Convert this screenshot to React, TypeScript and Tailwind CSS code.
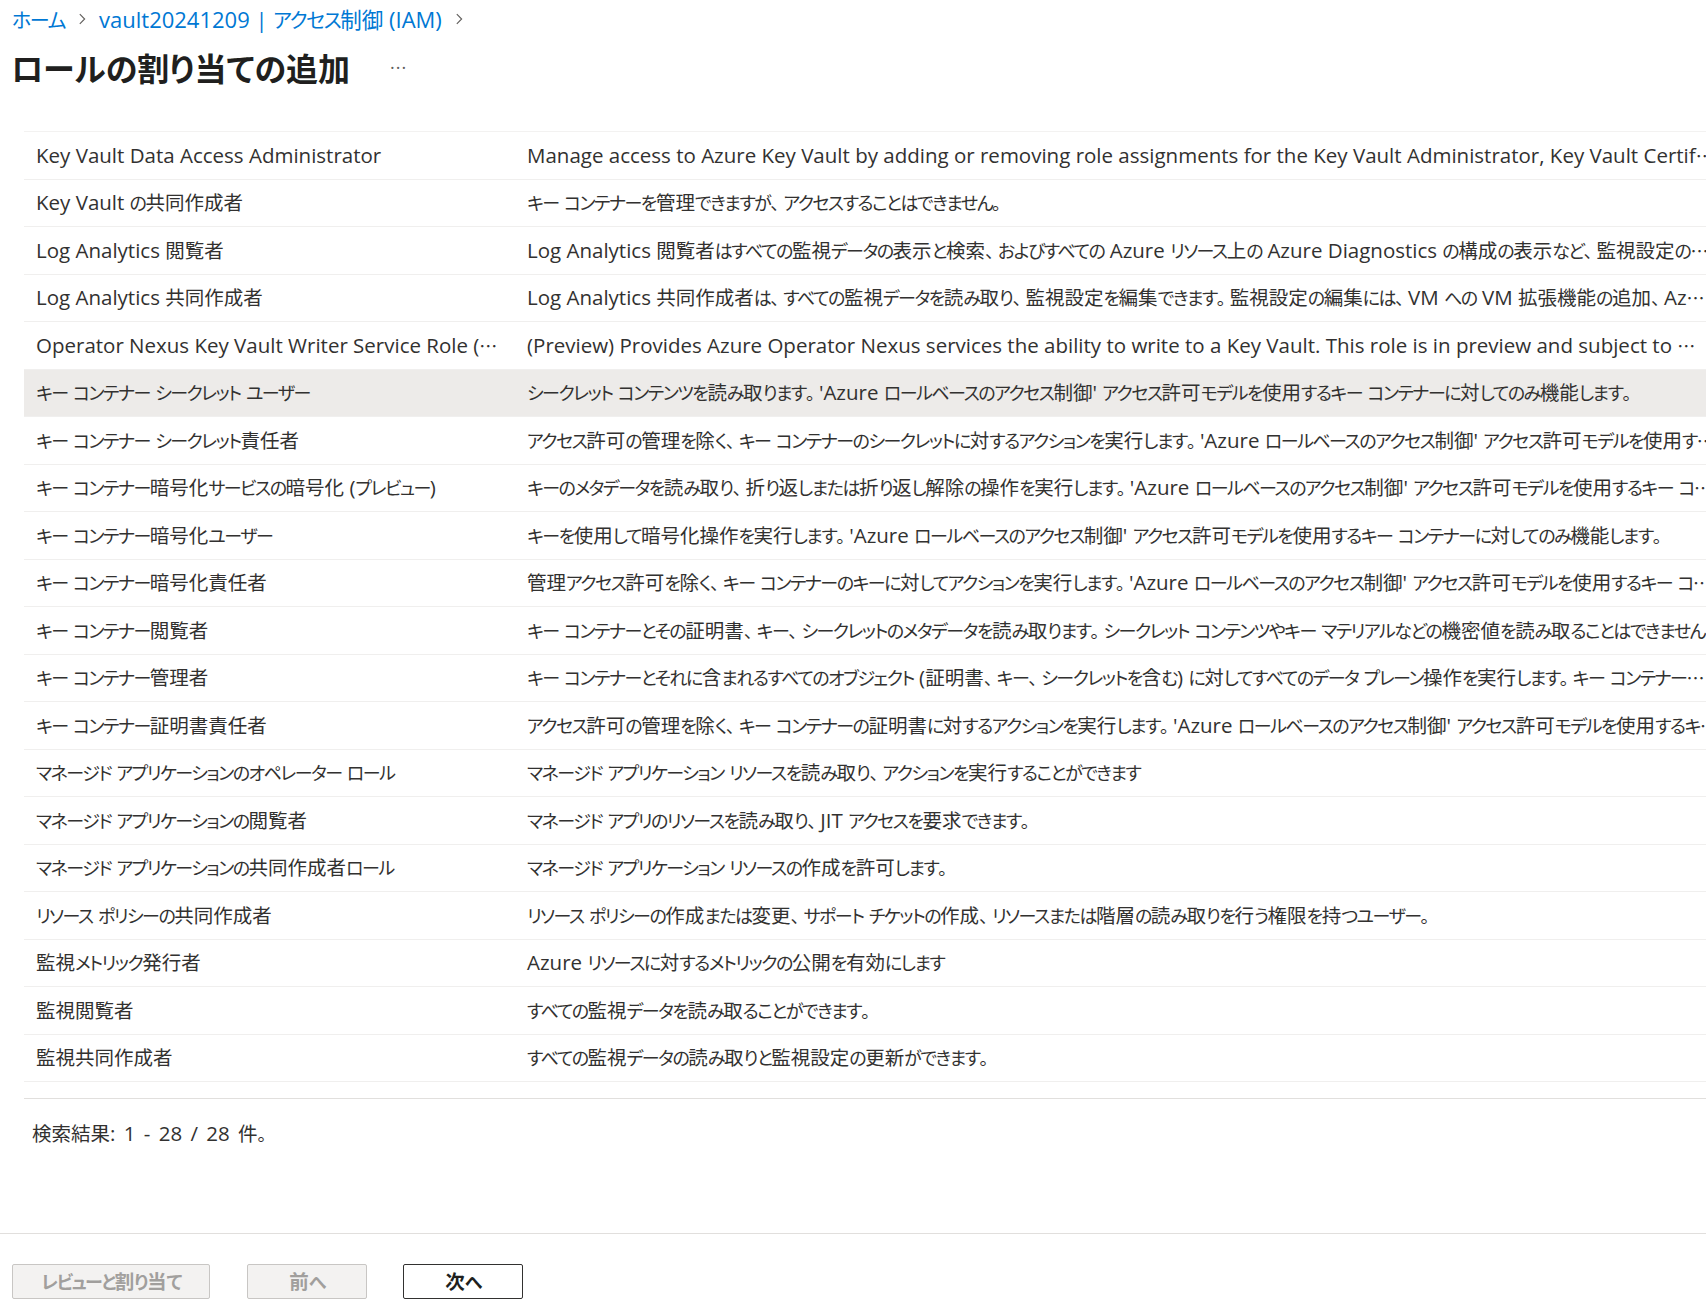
import React from "react";

const rows: [string, string][] = [
  ["Key Vault Data Access Administrator", "Manage access to Azure Key Vault by adding or removing role assignments for the Key Vault Administrator, Key Vault Certif…"],
  ["Key Vault の共同作成者", "キー コンテナーを管理できますが、アクセスすることはできません。"],
  ["Log Analytics 閲覧者", "Log Analytics 閲覧者はすべての監視データの表示と検索、およびすべての Azure リソース上の Azure Diagnostics の構成の表示など、監視設定の…"],
  ["Log Analytics 共同作成者", "Log Analytics 共同作成者は、すべての監視データを読み取り、監視設定を編集できます。監視設定の編集には、VM への VM 拡張機能の追加、Az…"],
  ["Operator Nexus Key Vault Writer Service Role (…", "(Preview) Provides Azure Operator Nexus services the ability to write to a Key Vault. This role is in preview and subject to …"],
  ["キー コンテナー シークレット ユーザー", "シークレット コンテンツを読み取ります。'Azure ロールベースのアクセス制御' アクセス許可モデルを使用するキー コンテナーに対してのみ機能します。"],
  ["キー コンテナー シークレット責任者", "アクセス許可の管理を除く、キー コンテナーのシークレットに対するアクションを実行します。'Azure ロールベースのアクセス制御' アクセス許可モデルを使用す…"],
  ["キー コンテナー暗号化サービスの暗号化 (プレビュー)", "キーのメタデータを読み取り、折り返しまたは折り返し解除の操作を実行します。'Azure ロールベースのアクセス制御' アクセス許可モデルを使用するキー コ…"],
  ["キー コンテナー暗号化ユーザー", "キーを使用して暗号化操作を実行します。'Azure ロールベースのアクセス制御' アクセス許可モデルを使用するキー コンテナーに対してのみ機能します。"],
  ["キー コンテナー暗号化責任者", "管理アクセス許可を除く、キー コンテナーのキーに対してアクションを実行します。'Azure ロールベースのアクセス制御' アクセス許可モデルを使用するキー コ…"],
  ["キー コンテナー閲覧者", "キー コンテナーとその証明書、キー、シークレットのメタデータを読み取ります。シークレット コンテンツやキー マテリアルなどの機密値を読み取ることはできません…"],
  ["キー コンテナー管理者", "キー コンテナーとそれに含まれるすべてのオブジェクト (証明書、キー、シークレットを含む) に対してすべてのデータ プレーン操作を実行します。キー コンテナー…"],
  ["キー コンテナー証明書責任者", "アクセス許可の管理を除く、キー コンテナーの証明書に対するアクションを実行します。'Azure ロールベースのアクセス制御' アクセス許可モデルを使用するキ…"],
  ["マネージド アプリケーションのオペレーター ロール", "マネージド アプリケーション リソースを読み取り、アクションを実行することができます"],
  ["マネージド アプリケーションの閲覧者", "マネージド アプリのリソースを読み取り、JIT アクセスを要求できます。"],
  ["マネージド アプリケーションの共同作成者ロール", "マネージド アプリケーション リソースの作成を許可します。"],
  ["リソース ポリシーの共同作成者", "リソース ポリシーの作成または変更、サポート チケットの作成、リソースまたは階層の読み取りを行う権限を持つユーザー。"],
  ["監視メトリック発行者", "Azure リソースに対するメトリックの公開を有効にします"],
  ["監視閲覧者", "すべての監視データを読み取ることができます。"],
  ["監視共同作成者", "すべての監視データの読み取りと監視設定の更新ができます。"],
];

const SPLIT = /([、。]+|[\u3400-\u9fff\u3005]+|[\u2026\u3000\u3003\u3004\u3006-\u30ff\uff00-\uffef]+)/;
const PUNCT = /^[、。]/;
const KANJI = /^[\u3400-\u9fff\u3005]/;
const KANA = /^[\u2026\u3000\u3003\u3004\u3006-\u30ff\uff00-\uffef]/;

const CLS = {
  row: {
    punct: "font-['Noto_Sans_CJK_JP',sans-serif] [font-feature-settings:normal] text-[18px] tracking-[-5px]",
    kanji: "font-['Noto_Sans_CJK_JP',sans-serif] text-[19.5px]",
    kana: "font-['Noto_Sans_CJK_JP',sans-serif] text-[18px] tracking-[-1.5px]",
  },
  bc: {
    punct: "font-['Noto_Sans_CJK_JP',sans-serif] text-[20px]",
    kanji: "font-['Noto_Sans_CJK_JP',sans-serif] text-[21.5px]",
    kana: "font-['Noto_Sans_CJK_JP',sans-serif] text-[20px] tracking-[-1.4px]",
  },
};

function T({ s, v = "row" }: { s: string; v?: "row" | "bc" }) {
  const parts = s.split(SPLIT);
  return (
    <>
      {parts.map((p, i) => {
        if (!p) return null;
        if (PUNCT.test(p))
          return (
            <span key={i} className={CLS[v].punct}>
              {p}
            </span>
          );
        if (KANJI.test(p))
          return (
            <span key={i} className={CLS[v].kanji}>
              {p}
            </span>
          );
        if (KANA.test(p))
          return (
            <span key={i} className={CLS[v].kana}>
              {p}
            </span>
          );
        return <span key={i}>{p}</span>;
      })}
    </>
  );
}

function Chevron() {
  return (
    <svg width="14" height="14" viewBox="0 0 16 16" className="mx-[10px] shrink-0">
      <path d="M5.5 2.5 L11 8 L5.5 13.5" fill="none" stroke="#605e5c" strokeWidth="1.3" />
    </svg>
  );
}

export default function App() {
  return (
    <div
      lang="ja"
      className="relative w-full h-[1310px] overflow-hidden bg-white text-[#323130] font-['Open_Sans','Noto_Sans_CJK_JP',sans-serif] [font-feature-settings:'palt'] text-[20.5px]"
    >
      {/* breadcrumb */}
      <div className="h-[38px] flex items-center pl-[12px] text-[#0078d4] whitespace-nowrap text-[22px]">
        <span>
          <T s="ホーム" v="bc" />
        </span>
        <Chevron />
        <span>
          <T s="vault20241209 | アクセス制御 (IAM)" v="bc" />
        </span>
        <Chevron />
      </div>

      {/* title */}
      <div className="h-[58px] flex items-center pl-[11px] whitespace-nowrap">
        <h1 className="font-['Noto_Sans_CJK_JP',sans-serif] text-[32px] font-bold text-[#201f1e] leading-none">
          ロールの割り当ての追加
        </h1>
        <span className="ml-[40px] text-[18px] text-[#605e5c] tracking-[1px]">···</span>
      </div>

      {/* table */}
      <div className="mt-[35px] ml-[24px] w-[1700px] border-t border-[#f3f2f1]">
        {rows.map(([name, desc], i) => (
          <div
            key={i}
            className={
              "h-[47.5px] flex items-center border-b border-[#f0efee] whitespace-nowrap " +
              (i === 5 ? "bg-[#edebe9]" : "bg-white")
            }
          >
            <div className="w-[491px] shrink-0 px-[12px] overflow-hidden">
              <T s={name} />
            </div>
            <div className="flex-1 min-w-0 pl-[12px] overflow-hidden">
              <T s={desc} />
            </div>
          </div>
        ))}
      </div>

      <div className="mt-[16px] ml-[24px] border-t border-[#e1dfdd]" />

      <div className="mt-[20px] pl-[32px] h-[28px] flex items-center whitespace-nowrap [word-spacing:3px]">
        <span>
          <T s="検索結果: 1 - 28 / 28 件。" />
        </span>
      </div>

      {/* footer */}
      <div className="absolute left-0 right-0 top-[1233px] border-t border-[#e1dfdd]">
        <div className="pt-[30px] pl-[12px] flex items-center">
          <button className="w-[198px] h-[35px] rounded-[2px] border border-[#c8c6c4] bg-[#f3f2f1] text-[#a19f9d] font-bold">
            <T s="レビューと割り当て" />
          </button>
          <button className="ml-[37px] w-[120px] h-[35px] rounded-[2px] border border-[#c8c6c4] bg-[#f3f2f1] text-[#a19f9d] font-bold">
            <T s="前へ" />
          </button>
          <button className="ml-[36px] w-[120px] h-[35px] rounded-[2px] border border-[#323130] bg-white text-[#201f1e] font-bold">
            <T s="次へ" />
          </button>
        </div>
      </div>
    </div>
  );
}
